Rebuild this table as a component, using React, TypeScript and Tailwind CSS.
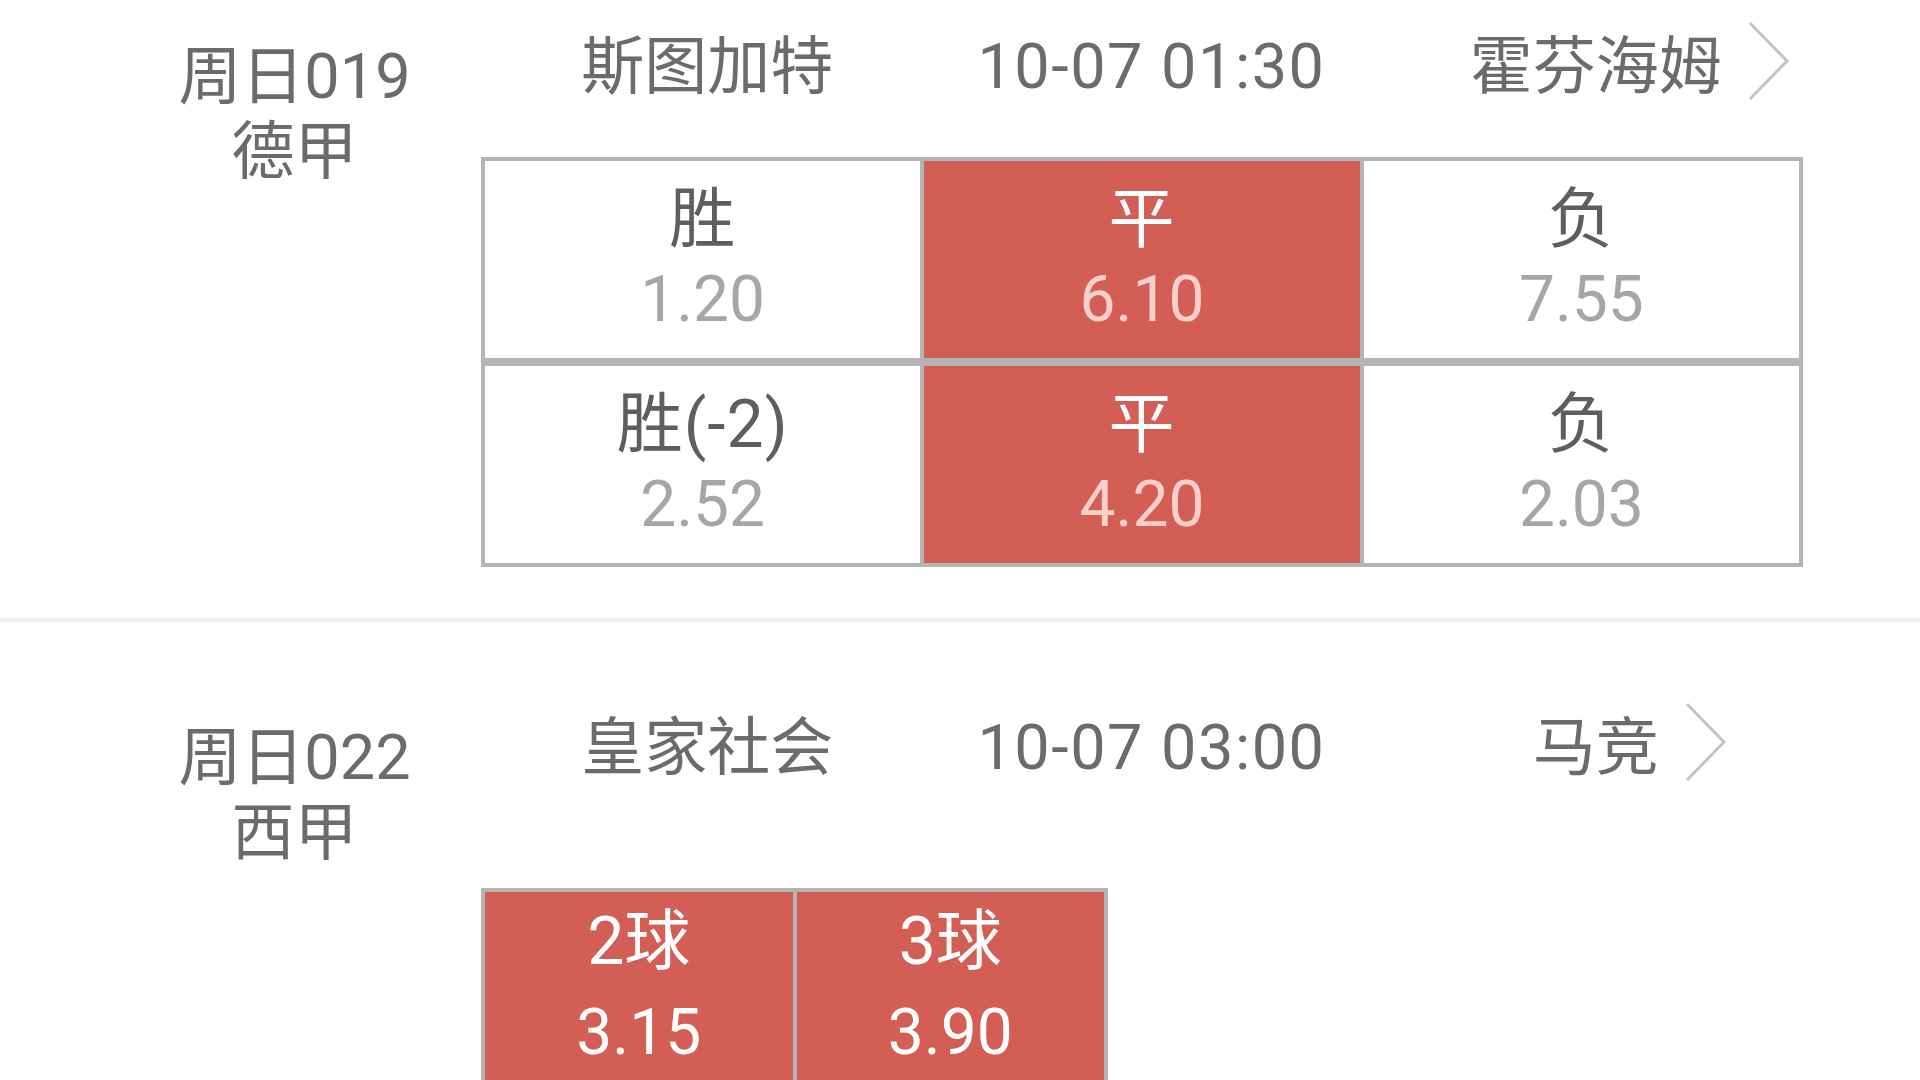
import React from 'react';

type Odd = { label: string; odds: string; on?: boolean };

const matches = [
    {
        no: '周日019',
        league: '德甲',
        home: '斯图加特',
        time: '10-07 01:30',
        away: '霍芬海姆',
        rows: [
            [
                { label: '胜', odds: '1.20' },
                { label: '平', odds: '6.10', on: true },
                { label: '负', odds: '7.55' },
            ],
            [
                { label: '胜(-2)', odds: '2.52' },
                { label: '平', odds: '4.20', on: true },
                { label: '负', odds: '2.03' },
            ],
        ] as Odd[][],
    },
];

const Chevron = () => (
    <svg
        width="44"
        height="80"
        viewBox="0 0 44 80"
        fill="none"
        stroke="#c4c4c4"
        strokeWidth="3"
        className="absolute left-full top-[-8px] ml-[25px]"
    >
        <polyline points="3,2 40,40 3,78" />
    </svg>
);

const Cell = ({ label, odds, on, first }: Odd & { first?: boolean }) => (
    <div
        className={`flex flex-1 flex-col items-center pt-[21px] ${on ? 'bg-[#d35e55]' : 'bg-white'} ${first ? '' : 'border-l-4 border-[#b4b4b4]'}`}
    >
        <div className={`text-[66px] leading-[76px] tracking-[1px] ${on ? 'text-white' : 'text-[#5e5e5e]'}`}>{label}</div>
        <div className={`mt-[10px] text-[64px] leading-[64px] ${on ? 'text-[#f9cfca]' : 'text-[#a6a6a6]'}`}>{odds}</div>
    </div>
);

const GoalCell = ({ label, odds, first }: Odd & { first?: boolean }) => (
    <div
        className={`flex flex-1 flex-col items-center bg-[#d35e55] pt-[12px] ${first ? '' : 'border-l-4 border-[#b4b4b4]'}`}
    >
        <div className="text-[66px] leading-[76px] text-white">{label}</div>
        <div className="mt-[21px] text-[64px] leading-[64px] text-white">{odds}</div>
    </div>
);

// league column
const League = ({ no, league }: { no: string; league: string }) => (
    <div className="w-[481px] shrink-0 pl-[108px] pt-[10px] text-center text-[63px] leading-[75px] text-[#6b6b6b]">
        <div>{no}</div>
        <div>{league}</div>
    </div>
);

const TeamsRow = ({ home, time, away }: { home: string; time: string; away: string }) => (
    <div className="ml-[4px] grid w-[1333px] grid-cols-3 text-center text-[63px] leading-[75px] text-[#6b6b6b]">
        <div>{home}</div>
        <div className="tracking-[1.5px]">{time}</div>
        <div>
            <span className="relative inline-block">
                {away}
                <Chevron />
            </span>
        </div>
    </div>
);

export default function App() {
    const m = matches[0];
    return (
        <div className="h-[1080px] w-[1920px] overflow-hidden bg-white font-['Roboto','Noto_Sans_CJK_SC',sans-serif]">
            <div className="-mt-[59px]">
                {/* match 1 */}
                <section className="flex pt-[88px] pb-[51px]">
                    <League no={m.no} league={m.league} />
                    <div className="w-[1322px]">
                        <TeamsRow home={m.home} time={m.time} away={m.away} />
                        <div className="mt-[53px]">
                            {m.rows.map((row, i) => (
                                <div key={i} className="flex h-[205px] border-4 border-[#b4b4b4]">
                                    {row.map((c, j) => (
                                        <Cell key={j} {...c} first={j === 0} />
                                    ))}
                                </div>
                            ))}
                        </div>
                    </div>
                </section>

                <div className="h-[4px] bg-[#efefef]" />

                {/* match 2 */}
                <section className="flex pt-[88px]">
                    <League no="周日022" league="西甲" />
                    <div className="w-[1322px]">
                        <TeamsRow home="皇家社会" time="10-07 03:00" away="马竞" />
                        <div className="mt-[103px] flex h-[260px] w-[627px] border-4 border-[#b4b4b4]">
                            <GoalCell label="2球" odds="3.15" first />
                            <GoalCell label="3球" odds="3.90" />
                        </div>
                    </div>
                </section>
            </div>
        </div>
    );
}
